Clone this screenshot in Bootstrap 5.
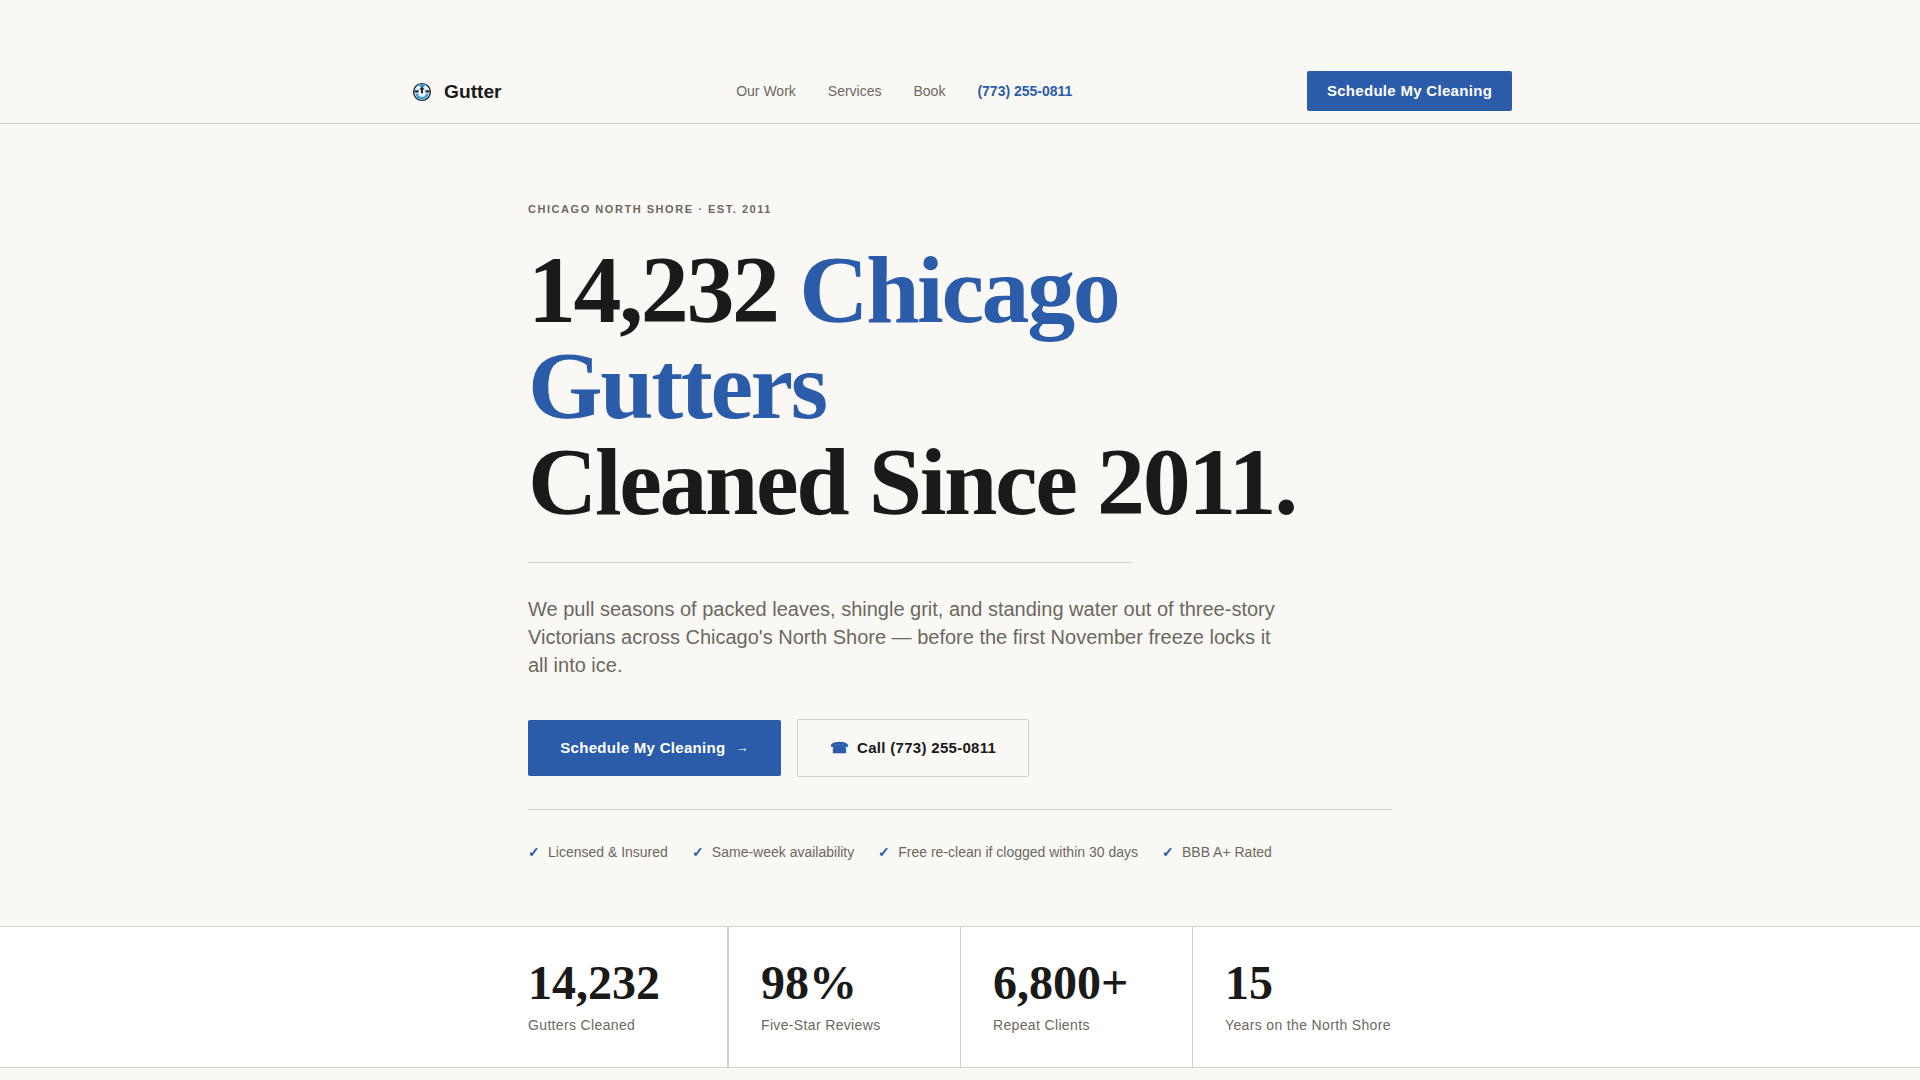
<!DOCTYPE html>
<html lang="en">
<head>
  <meta charset="UTF-8">
  <meta name="viewport" content="width=device-width, initial-scale=1.0">
  <title>Gutter</title>

  <link href="https://cdn.jsdelivr.net/npm/bootstrap@5.3.0/dist/css/bootstrap.min.css" rel="stylesheet">
  <script src="https://cdn.jsdelivr.net/npm/bootstrap@5.3.0/dist/js/bootstrap.bundle.min.js"></script>

  <style>
    html, body {
      height: 1080px;
      overflow: hidden;
    }

    body {
      font-family: "Liberation Sans", Arial, sans-serif;
      background: #faf8f5;
      color: #1a1a18;
    }

    /* Navbar */
    .site-nav {
      height: 124px;
      padding-top: 71px;
      border-bottom: 1px solid #cfccc6;
    }

    .nav-inner {
      width: 1120px;
      height: 40px;
      padding: 0 8px 0 12px;
    }

    .brand-link {
      gap: 12px;
      font-size: 19.2px;
      line-height: 22px;
      padding-top: 1px;
      font-weight: 700;
      color: #1a1a18;
      text-decoration: none;
    }

    .menu-links {
      gap: 32px;
      font-size: 14px;
    }

    .menu-links a {
      color: #6b6860;
      text-decoration: none;
    }

    .menu-links a.phone-link {
      color: #2a5caa;
      font-weight: 700;
    }

    .btn-blue {
      background: #2a5caa;
      color: #fff;
      border: 0;
      border-radius: 2px;
      font-weight: 700;
      letter-spacing: 0.3px;
    }

    .btn-blue:hover {
      background: #234e92;
      color: #fff;
    }

    .nav-cta {
      width: 205px;
      height: 40px;
      padding: 0;
      font-size: 15px;
    }

    /* Hero */
    .hero-wrap {
      width: 864px;
      height: 802px;
      padding-top: 79px;
    }

    .eyebrow {
      font-size: 11px;
      line-height: 13px;
      font-weight: 700;
      letter-spacing: 1.54px;
      color: #6b6860;
      margin-bottom: 26px;
    }

    .hero-title {
      font-family: "Liberation Serif", "Times New Roman", serif;
      font-size: 96px;
      line-height: 96px;
      font-weight: 700;
      letter-spacing: -2.4px;
      margin: 0 0 32px;
    }

    .hero-title span {
      color: #2a5caa;
    }

    .short-rule {
      width: 70%;
      height: 1px;
      background: #d4d2cc;
      margin-bottom: 32px;
    }

    .hero-text {
      width: 760px;
      font-size: 20px;
      line-height: 28px;
      color: #6b6860;
      margin-bottom: 41px;
    }

    .hero-actions {
      gap: 16px;
      margin-bottom: 32px;
    }

    .hero-cta {
      width: 253px;
      height: 56px;
      gap: 10px;
      font-size: 15px;
      padding: 0;
    }

    .hero-cta .arrow {
      font-size: 13px;
    }

    .call-btn {
      width: 232px;
      height: 58px;
      margin-top: -1px;
      gap: 8px;
      padding: 0;
      background: transparent;
      border: 1px solid #d4d2cc;
      border-radius: 2px;
      color: #1a1a18;
      font-size: 15px;
      font-weight: 700;
      letter-spacing: 0.3px;
    }

    .call-btn .phone-glyph {
      color: #2a5caa;
    }

    .trust-row {
      border-top: 1px solid #d4d2cc;
      padding-top: 34px;
      gap: 24px;
      font-size: 14px;
      line-height: 16px;
      color: #6b6860;
    }

    .trust-row .tick {
      color: #2a5caa;
      font-size: 14px;
      font-weight: 700;
      margin-right: 8px;
    }

    /* Stats */
    .stats-band {
      height: 142px;
      background: #fff;
      border-top: 1px solid #d4d2cc;
      border-bottom: 1px solid #d4d2cc;
    }

    .stats-inner {
      width: 864px;
      height: 100%;
    }

    .stat-cell {
      flex: 1;
      padding: 32px 32px 0;
      border-right: 1px solid #d4d2cc;
    }

    .stat-cell:first-child {
      padding-left: 0;
      border-right-width: 2px;
    }

    .stat-cell:last-child {
      padding-right: 0;
      border-right: 0;
    }

    .stat-num {
      font-family: "Liberation Serif", "Times New Roman", serif;
      font-size: 48px;
      line-height: 48px;
      font-weight: 700;
      margin-bottom: 8px;
    }

    .stat-label {
      font-size: 14px;
      line-height: 20px;
      letter-spacing: 0.35px;
      color: #6b6860;
      white-space: nowrap;
    }
  </style>
</head>
<body>
  <nav class="site-nav">
    <div class="nav-inner mx-auto d-flex align-items-center justify-content-between">
      <a class="brand-link d-flex align-items-center" href="#">
        <svg width="20" height="20" viewBox="0 0 20 20" aria-hidden="true">
          <circle cx="10" cy="10" r="8.4" fill="#eaf3f9" stroke="#1d2b33" stroke-width="1.4"/>
          <path d="M6.6 2.4a8.2 8.2 0 0 1 6.8 0L12 5H8z" fill="#3a9ad9"/>
          <path d="M10 4.2 12.6 7.4H11V11.2H9V7.4H7.4z" fill="#1d2b33"/>
          <path d="M2.6 8.2h4v2.2h-4zM13.4 8.2h4v2.2h-4z" fill="#1d2b33"/>
          <path d="M3.4 11.6a6.7 6.7 0 0 0 13.2 0h-2.4a4.3 4.3 0 0 1-8.4 0z" fill="#3a9ad9"/>
        </svg>
        Gutter
      </a>
      <div class="menu-links d-flex align-items-center">
        <a href="#">Our Work</a>
        <a href="#">Services</a>
        <a href="#">Book</a>
        <a class="phone-link" href="#">(773) 255-0811</a>
      </div>
      <a class="btn btn-blue nav-cta d-flex align-items-center justify-content-center" href="#">Schedule My Cleaning</a>
    </div>
  </nav>

  <section class="hero-wrap mx-auto">
    <div class="eyebrow">CHICAGO NORTH SHORE · EST. 2011</div>
    <h1 class="hero-title">14,232 <span>Chicago Gutters</span><br>Cleaned Since 2011.</h1>
    <div class="short-rule"></div>
    <p class="hero-text">We pull seasons of packed leaves, shingle grit, and standing water out of three-story Victorians across Chicago's North Shore — before the first November freeze locks it all into ice.</p>
    <div class="hero-actions d-flex">
      <a class="btn btn-blue hero-cta d-flex align-items-center justify-content-center" href="#"><span>Schedule My Cleaning</span><span class="arrow">→</span></a>
      <a class="btn call-btn d-flex align-items-center justify-content-center" href="#"><span class="phone-glyph">☎</span><span>Call (773) 255-0811</span></a>
    </div>
    <div class="trust-row d-flex">
      <span><span class="tick">✓</span>Licensed &amp; Insured</span>
      <span><span class="tick">✓</span>Same-week availability</span>
      <span><span class="tick">✓</span>Free re-clean if clogged within 30 days</span>
      <span><span class="tick">✓</span>BBB A+ Rated</span>
    </div>
  </section>

  <section class="stats-band">
    <div class="stats-inner mx-auto d-flex">
      <div class="stat-cell"><div class="stat-num">14,232</div><div class="stat-label">Gutters Cleaned</div></div>
      <div class="stat-cell"><div class="stat-num">98%</div><div class="stat-label">Five-Star Reviews</div></div>
      <div class="stat-cell"><div class="stat-num">6,800+</div><div class="stat-label">Repeat Clients</div></div>
      <div class="stat-cell"><div class="stat-num">15</div><div class="stat-label">Years on the North Shore</div></div>
    </div>
  </section>
</body>
</html>
